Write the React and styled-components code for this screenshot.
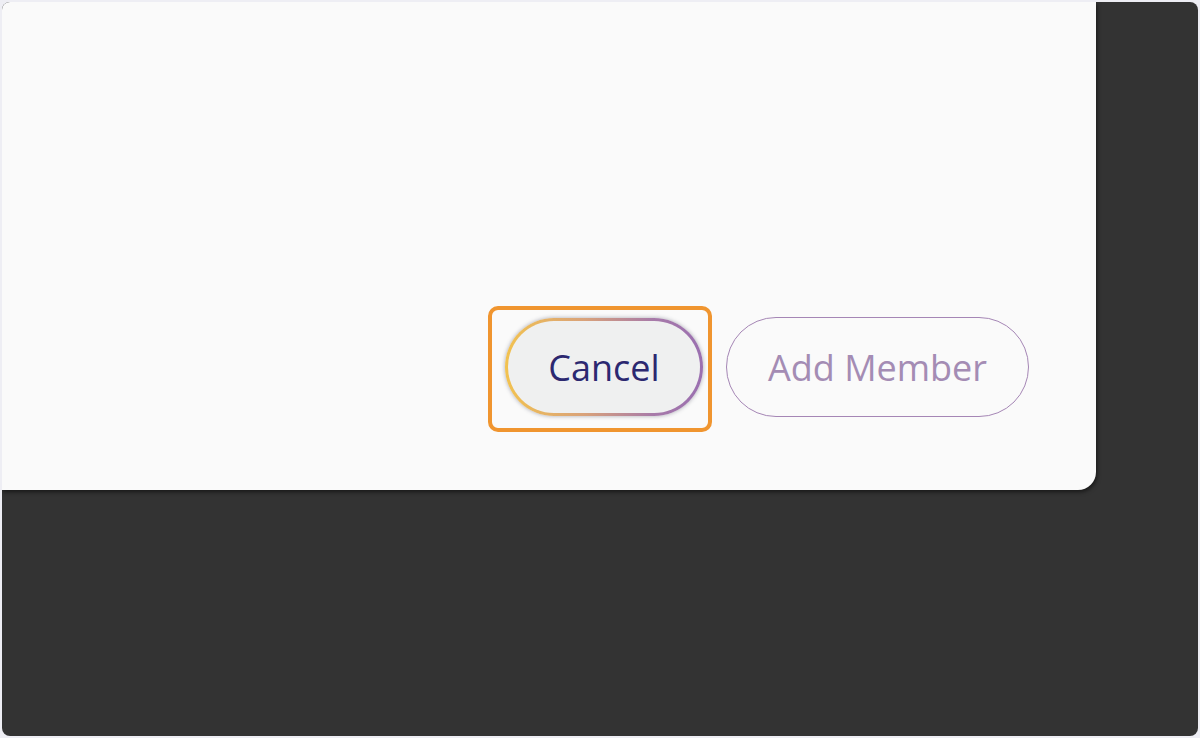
import React from 'react';
import styled, { createGlobalStyle } from 'styled-components';

const GlobalStyle = createGlobalStyle`
  html, body {
    margin: 0;
    padding: 0;
    background: #eeeef4;
  }
  * {
    box-sizing: border-box;
  }
`;

const Frame = styled.div`
  width: 1200px;
  height: 738px;
  padding: 2px;
`;

const Stage = styled.div`
  height: 100%;
  background: #333333;
  border-radius: 8px;
  overflow: hidden;
`;

const Panel = styled.div`
  width: 1094px;
  height: 488px;
  background: #fafafa;
  border-bottom-right-radius: 18px;
  box-shadow: 1px 2px 4px rgba(0, 0, 0, 0.55);
  display: flex;
  justify-content: flex-end;
  align-items: flex-end;
  gap: 23px;
  padding: 0 67px 73px 0;
`;

// orange focus ring drawn over the cancel button
const Highlight = styled.div`
  position: relative;
  margin-bottom: 1px;

  &::after {
    content: '';
    position: absolute;
    top: -12px;
    left: -17px;
    right: -9px;
    bottom: -16px;
    border: 4px solid #f0952f;
    border-radius: 10px;
    pointer-events: none;
  }
`;

const PillButton = styled.button`
  height: ${({ $height }) => $height}px;
  width: ${({ $width }) => $width}px;
  border-radius: 999px;
  font-family: "Open Sans", "Noto Sans", sans-serif;
  font-size: 36px;
  display: flex;
  align-items: center;
  justify-content: center;
  cursor: pointer;
  padding: 0;
`;

const CancelButton = styled(PillButton)`
  color: #2c2870;
  border: 3px solid transparent;
  background:
    linear-gradient(#eff0f0, #eff0f0) padding-box,
    linear-gradient(90deg, #f2c24f 0%, #d9a27a 40%, #a77aa9 75%, #9a6fb0 100%) border-box;
  box-shadow: 0 0 4px rgba(70, 70, 90, 0.45);
`;

const AddButton = styled(PillButton)`
  color: #a48cb4;
  background: transparent;
  border: 1.5px solid #a586b5;
`;

export default function App() {
  return (
    <>
      <GlobalStyle />
      <Frame>
        <Stage>
          <Panel>
            <Highlight>
              <CancelButton $width={198} $height={98}>Cancel</CancelButton>
            </Highlight>
            <AddButton $width={303} $height={100}>Add Member</AddButton>
          </Panel>
        </Stage>
      </Frame>
    </>
  );
}
